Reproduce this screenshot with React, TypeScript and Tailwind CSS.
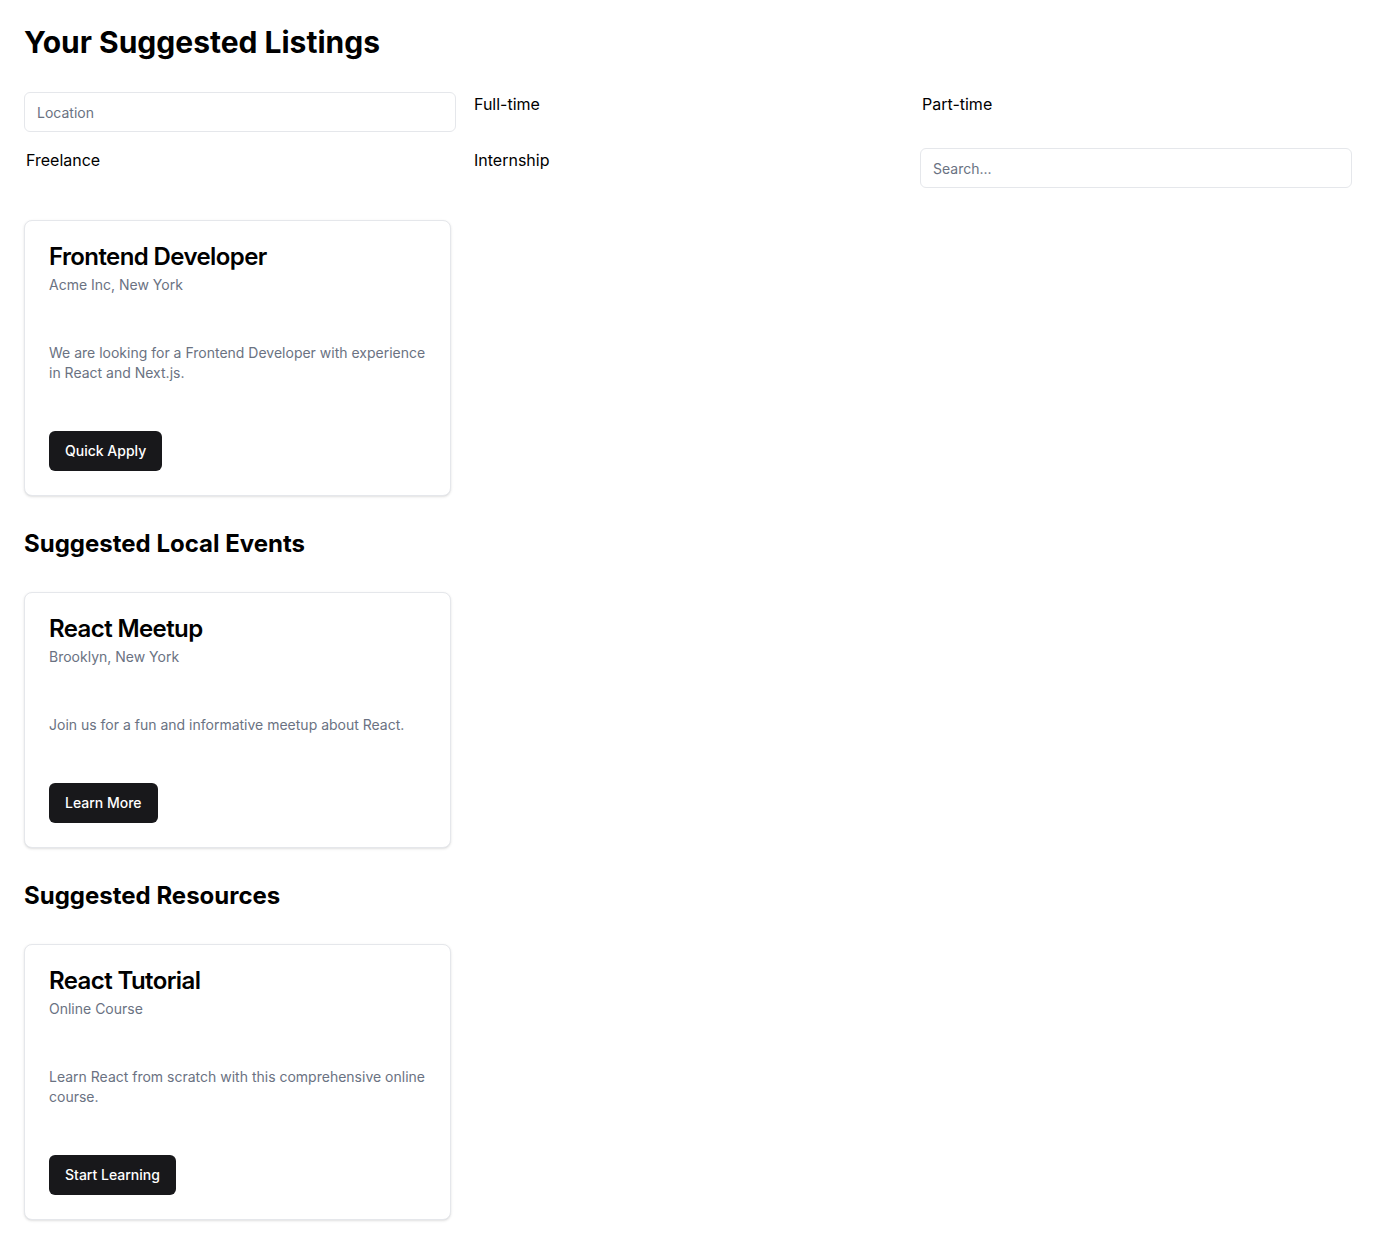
import React from 'react';

type Item = {
  title: string;
  subtitle: string;
  desc: string;
  action: string;
};

const LISTINGS: Item[] = [
  {
    title: 'Frontend Developer',
    subtitle: 'Acme Inc, New York',
    desc: 'We are looking for a Frontend Developer with experience in React and Next.js.',
    action: 'Quick Apply',
  },
];

const EVENTS: Item[] = [
  {
    title: 'React Meetup',
    subtitle: 'Brooklyn, New York',
    desc: 'Join us for a fun and informative meetup about React.',
    action: 'Learn More',
  },
];

const RESOURCES: Item[] = [
  {
    title: 'React Tutorial',
    subtitle: 'Online Course',
    desc: 'Learn React from scratch with this comprehensive online course.',
    action: 'Start Learning',
  },
];

function Card({ item }: { item: Item }) {
  return (
    <div className="rounded-lg border border-gray-200 bg-white shadow-sm">
      <div className="flex flex-col gap-1.5 p-6">
        <h3 className="text-2xl leading-none font-semibold tracking-tight text-black">{item.title}</h3>
        <p className="text-sm text-gray-500">{item.subtitle}</p>
      </div>
      <div className="p-6">
        <p className="text-sm text-gray-500">{item.desc}</p>
      </div>
      <div className="flex items-center p-6">
        <button className="h-10 rounded-md bg-[#18181b] px-4 text-sm font-medium text-white">
          {item.action}
        </button>
      </div>
    </div>
  );
}

function CardGrid({ items }: { items: Item[] }) {
  return (
    <div className="grid grid-cols-3 gap-6">
      {items.map((it) => (
        <Card key={it.title} item={it} />
      ))}
    </div>
  );
}

export default function App() {
  return (
    <div className="min-h-screen bg-white p-6 text-black" style={{ fontFamily: 'Inter, "Liberation Sans", sans-serif' }}>
      <h1 className="mb-8 text-3xl font-bold">Your Suggested Listings</h1>

      <div className="mb-8 grid grid-cols-3 gap-4">
        <input
          className="h-10 w-full rounded-md border border-gray-200 bg-white px-3 text-sm placeholder:text-gray-500 outline-none"
          placeholder="Location"
        />
        <label className="pl-0.5 text-base">Full-time</label>
        <label className="pl-0.5 text-base">Part-time</label>
        <label className="pl-0.5 text-base">Freelance</label>
        <label className="pl-0.5 text-base">Internship</label>
        <input
          className="h-10 w-full rounded-md border border-gray-200 bg-white px-3 text-sm placeholder:text-gray-500 outline-none"
          placeholder="Search..."
        />
      </div>

      <CardGrid items={LISTINGS} />

      <h2 className="my-8 text-2xl font-bold">Suggested Local Events</h2>
      <CardGrid items={EVENTS} />

      <h2 className="my-8 text-2xl font-bold">Suggested Resources</h2>
      <CardGrid items={RESOURCES} />
    </div>
  );
}
